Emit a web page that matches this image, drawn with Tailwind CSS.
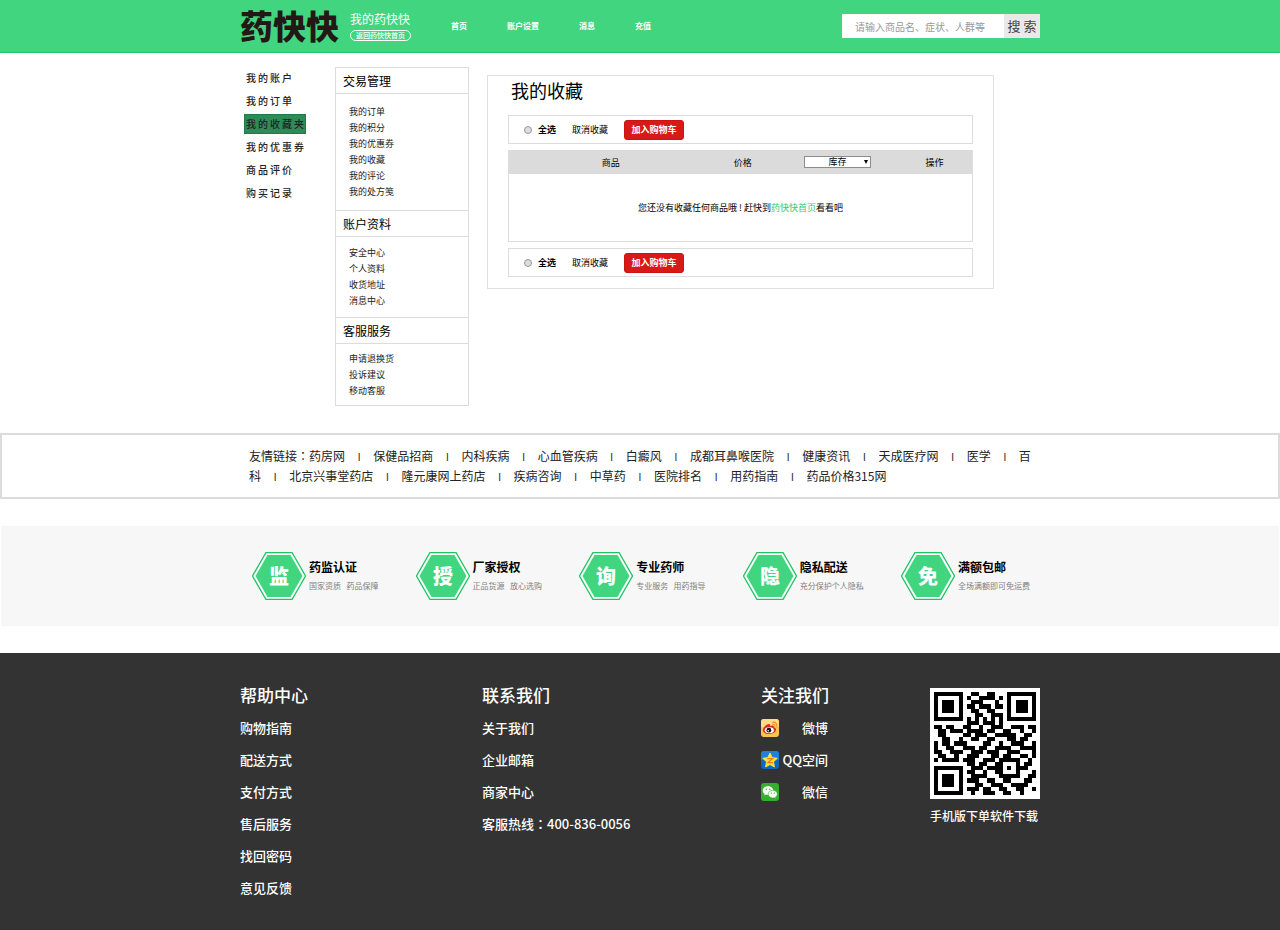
<!DOCTYPE html>
<html lang="zh-CN">
<head>
    <meta charset="UTF-8">
    <meta name="viewport" content="width=device-width, initial-scale=1.0">
    <title>我的收藏 - 药快快</title>
    <script src="https://cdn.jsdelivr.net/npm/@tailwindcss/browser@4"></script>
</head>
<body class="min-h-screen flex flex-col bg-white text-[#222] font-['Noto_Sans_CJK_SC',sans-serif]">

    <!-- 顶部 -->
    <header class="bg-[#42d57f] border-b border-[#1cc563]">
        <div class="max-w-[800px] h-[52px] mx-auto flex items-center">
            <a href="#" class="pb-[2px] text-[33px] leading-[33px] font-black text-[#231815]">药快快</a>
            <div class="ml-[11px] w-[61px] text-white">
                <p class="text-[12px] leading-4 whitespace-nowrap">我的药快快</p>
                <a href="#" class="mt-[3px] mb-px h-[11px] border border-white rounded-full flex items-center justify-center text-[7px] leading-none font-medium whitespace-nowrap">返回药快快首页</a>
            </div>
            <nav class="ml-10 flex gap-10 text-[8px] font-bold text-white whitespace-nowrap">
                <a href="#">首页</a>
                <a href="#">账户设置</a>
                <a href="#">消息</a>
                <a href="#">充值</a>
            </nav>
            <form class="ml-auto h-6 flex">
                <input type="text" aria-label="搜索商品" placeholder="请输入商品名、症状、人群等" class="w-[162px] bg-white pl-[13px] text-[10px] placeholder:text-[#999] outline-none">
                <button type="button" class="w-9 bg-[#e9e9e9] text-[13px] leading-6 text-[#444] whitespace-nowrap">搜 索</button>
            </form>
        </div>
    </header>

    <!-- 主体 -->
    <div class="w-full max-w-[800px] mx-auto pt-[14px] flex items-start">
        <ul class="w-[91px] pl-1 pt-px shrink-0 flex flex-col items-start gap-[3px] text-[10px] leading-5 font-medium tracking-[2px] whitespace-nowrap">
            <li class="px-[2px]"><a href="#">我的账户</a></li>
            <li class="px-[2px]"><a href="#">我的订单</a></li>
            <li class="pl-[2px] bg-[#2e8b57] outline-1 -outline-offset-1 outline-[#217a48]"><a href="#">我的收藏夹</a></li>
            <li class="px-[2px]"><a href="#">我的优惠券</a></li>
            <li class="px-[2px]"><a href="#">商品评价</a></li>
            <li class="px-[2px]"><a href="#">购买记录</a></li>
        </ul>

        <aside class="ml-1 w-[134px] shrink-0 border border-[#dcdcdc] text-[9px] leading-4">
            <h2 class="pl-[7px] text-[12px] leading-[25px] text-black border-b border-[#dcdcdc]">交易管理</h2>
            <ul class="pl-[13px] py-[10px]">
                <li><a href="#">我的订单</a></li>
                <li><a href="#">我的积分</a></li>
                <li><a href="#">我的优惠券</a></li>
                <li><a href="#">我的收藏</a></li>
                <li><a href="#">我的评论</a></li>
                <li><a href="#">我的处方笺</a></li>
            </ul>
            <h2 class="pl-[7px] text-[12px] leading-[25px] text-black border-y border-[#dcdcdc]">账户资料</h2>
            <ul class="pl-[13px] py-2">
                <li><a href="#">安全中心</a></li>
                <li><a href="#">个人资料</a></li>
                <li><a href="#">收货地址</a></li>
                <li><a href="#">消息中心</a></li>
            </ul>
            <h2 class="pl-[7px] text-[12px] leading-[25px] text-black border-y border-[#dcdcdc]">客服服务</h2>
            <ul class="pl-[13px] pt-[7px] pb-[6px]">
                <li><a href="#">申请退换货</a></li>
                <li><a href="#">投诉建议</a></li>
                <li><a href="#">移动客服</a></li>
            </ul>
        </aside>

        <main class="ml-[18px] mt-2 w-[507px] px-5 pb-[11px] border border-[#e0e0e0] text-[9px] text-black">
            <h1 class="pl-[3px] pb-[11px] text-[18px] leading-7">我的收藏</h1>

            <div class="h-[29px] pl-[15px] border border-[#dcdcdc] flex items-center">
                <input type="radio" id="allTop" class="appearance-none size-2 rounded-full border border-[#999] bg-[#ddd]">
                <label for="allTop" class="ml-[6px] font-bold">全选</label>
                <button type="button" class="ml-4">取消收藏</button>
                <button type="button" class="ml-4 w-[60px] h-5 rounded-[3px] bg-[#d71a18] border border-[#c81414] text-white font-bold">加入购物车</button>
            </div>

            <table class="mt-[6px] w-full table-fixed border border-[#dcdcdc]">
                <thead>
                    <tr class="h-[23px] bg-[#dbdbdb]">
                        <th class="w-[44%] font-normal">商品</th>
                        <th class="w-[13%] font-normal">价格</th>
                        <th class="w-[28%] font-normal">
                            <div class="relative w-[67px] h-3 mx-auto">
                                <select aria-label="库存" class="appearance-none block w-full h-3 pl-[23px] bg-white border border-[#8c8c8c] text-[9px] leading-[10px]">
                                    <option>库存</option>
                                </select>
                                <span class="absolute right-[3px] top-1 border-x-2 border-x-transparent border-t-4 border-t-black pointer-events-none"></span>
                            </div>
                        </th>
                        <th class="w-[15%] pr-[6px] font-normal">操作</th>
                    </tr>
                </thead>
                <tbody>
                    <tr>
                        <td colspan="4" class="h-[68px] text-center">您还没有收藏任何商品哦 ! 赶快到<a href="#" class="text-[#2fcb70]">药快快首页</a>看看吧</td>
                    </tr>
                </tbody>
            </table>

            <div class="mt-[6px] h-[29px] pl-[15px] border border-[#dcdcdc] flex items-center">
                <input type="radio" id="allBottom" class="appearance-none size-2 rounded-full border border-[#999] bg-[#ddd]">
                <label for="allBottom" class="ml-[6px] font-bold">全选</label>
                <button type="button" class="ml-4">取消收藏</button>
                <button type="button" class="ml-4 w-[60px] h-5 rounded-[3px] bg-[#d71a18] border border-[#c81414] text-white font-bold">加入购物车</button>
            </div>
        </main>
    </div>

    <!-- 友情链接 -->
    <section class="mt-[27px] border-2 border-[#dcdcdc]">
        <p class="max-w-[800px] mx-auto pl-[9px] py-[11px] text-[12px] leading-5">
            友情链接<span class="font-['Noto_Sans_CJK_TC',sans-serif]" lang="zh-TW">：</span><a href="#">药房网</a>
            <span class="px-[10px] font-['Liberation_Sans',sans-serif] text-[10px] leading-none">I</span> <a href="#">保健品招商</a>
            <span class="px-[10px] font-['Liberation_Sans',sans-serif] text-[10px] leading-none">I</span> <a href="#">内科疾病</a>
            <span class="px-[10px] font-['Liberation_Sans',sans-serif] text-[10px] leading-none">I</span> <a href="#">心血管疾病</a>
            <span class="px-[10px] font-['Liberation_Sans',sans-serif] text-[10px] leading-none">I</span> <a href="#">白癜风</a>
            <span class="px-[10px] font-['Liberation_Sans',sans-serif] text-[10px] leading-none">I</span> <a href="#">成都耳鼻喉医院</a>
            <span class="px-[10px] font-['Liberation_Sans',sans-serif] text-[10px] leading-none">I</span> <a href="#">健康资讯</a>
            <span class="px-[10px] font-['Liberation_Sans',sans-serif] text-[10px] leading-none">I</span> <a href="#">天成医疗网</a>
            <span class="px-[10px] font-['Liberation_Sans',sans-serif] text-[10px] leading-none">I</span> <a href="#">医学</a>
            <span class="px-[10px] font-['Liberation_Sans',sans-serif] text-[10px] leading-none">I</span> <a href="#">百科</a>
            <span class="px-[10px] font-['Liberation_Sans',sans-serif] text-[10px] leading-none">I</span> <a href="#">北京兴事堂药店</a>
            <span class="px-[10px] font-['Liberation_Sans',sans-serif] text-[10px] leading-none">I</span> <a href="#">隆元康网上药店</a>
            <span class="px-[10px] font-['Liberation_Sans',sans-serif] text-[10px] leading-none">I</span> <a href="#">疾病咨询</a>
            <span class="px-[10px] font-['Liberation_Sans',sans-serif] text-[10px] leading-none">I</span> <a href="#">中草药</a>
            <span class="px-[10px] font-['Liberation_Sans',sans-serif] text-[10px] leading-none">I</span> <a href="#">医院排名</a>
            <span class="px-[10px] font-['Liberation_Sans',sans-serif] text-[10px] leading-none">I</span> <a href="#">用药指南</a>
            <span class="px-[10px] font-['Liberation_Sans',sans-serif] text-[10px] leading-none">I</span> <a href="#">药品价格315网</a>
        </p>
    </section>

    <!-- 服务承诺 -->
    <section class="mt-[27px] mx-px bg-[#f7f7f7]">
        <ul class="max-w-[800px] h-[100px] mx-auto pl-3 pr-[10px] flex items-center justify-between whitespace-nowrap">
            <li class="flex items-center gap-[3px]">
                <svg class="w-[54px] h-12" viewBox="0 0 54 48">
                    <path d="M14 .5h26L53.500 24 40 47.500H14L.5 24z" fill="#fff" stroke="#1cc563" stroke-width="1.300"/>
                    <path d="M15.500 3h23L50.500 24l-12 21h-23L3.500 24z" fill="#42d57f"/>
                    <text x="27" y="32" text-anchor="middle" font-size="20" font-weight="900" fill="#fff">监</text>
                </svg>
                <div>
                    <h3 class="text-[12px] leading-5 font-bold text-black">药监认证</h3>
                    <p class="text-[8px] leading-[18px] text-[#808080]">国家资质 &nbsp; 药品保障</p>
                </div>
            </li>
            <li class="flex items-center gap-[3px]">
                <svg class="w-[54px] h-12" viewBox="0 0 54 48">
                    <path d="M14 .5h26L53.500 24 40 47.500H14L.5 24z" fill="#fff" stroke="#1cc563" stroke-width="1.300"/>
                    <path d="M15.500 3h23L50.500 24l-12 21h-23L3.500 24z" fill="#42d57f"/>
                    <text x="27" y="32" text-anchor="middle" font-size="20" font-weight="900" fill="#fff">授</text>
                </svg>
                <div>
                    <h3 class="text-[12px] leading-5 font-bold text-black">厂家授权</h3>
                    <p class="text-[8px] leading-[18px] text-[#808080]">正品货源 &nbsp; 放心选购</p>
                </div>
            </li>
            <li class="flex items-center gap-[3px]">
                <svg class="w-[54px] h-12" viewBox="0 0 54 48">
                    <path d="M14 .5h26L53.500 24 40 47.500H14L.5 24z" fill="#fff" stroke="#1cc563" stroke-width="1.300"/>
                    <path d="M15.500 3h23L50.500 24l-12 21h-23L3.500 24z" fill="#42d57f"/>
                    <text x="27" y="32" text-anchor="middle" font-size="20" font-weight="900" fill="#fff">询</text>
                </svg>
                <div>
                    <h3 class="text-[12px] leading-5 font-bold text-black">专业药师</h3>
                    <p class="text-[8px] leading-[18px] text-[#808080]">专业服务 &nbsp; 用药指导</p>
                </div>
            </li>
            <li class="flex items-center gap-[3px]">
                <svg class="w-[54px] h-12" viewBox="0 0 54 48">
                    <path d="M14 .5h26L53.500 24 40 47.500H14L.5 24z" fill="#fff" stroke="#1cc563" stroke-width="1.300"/>
                    <path d="M15.500 3h23L50.500 24l-12 21h-23L3.500 24z" fill="#42d57f"/>
                    <text x="27" y="32" text-anchor="middle" font-size="20" font-weight="900" fill="#fff">隐</text>
                </svg>
                <div>
                    <h3 class="text-[12px] leading-5 font-bold text-black">隐私配送</h3>
                    <p class="text-[8px] leading-[18px] text-[#808080]">充分保护个人隐私</p>
                </div>
            </li>
            <li class="flex items-center gap-[3px]">
                <svg class="w-[54px] h-12" viewBox="0 0 54 48">
                    <path d="M14 .5h26L53.500 24 40 47.500H14L.5 24z" fill="#fff" stroke="#1cc563" stroke-width="1.300"/>
                    <path d="M15.500 3h23L50.500 24l-12 21h-23L3.500 24z" fill="#42d57f"/>
                    <text x="27" y="32" text-anchor="middle" font-size="20" font-weight="900" fill="#fff">免</text>
                </svg>
                <div>
                    <h3 class="text-[12px] leading-5 font-bold text-black">满额包邮</h3>
                    <p class="text-[8px] leading-[18px] text-[#808080]">全场满额即可免运费</p>
                </div>
            </li>
        </ul>
    </section>

    <!-- 底部 -->
    <footer class="mt-[27px] grow bg-[#333] text-white">
        <div class="max-w-[800px] mx-auto pt-[30px] pb-[26px] flex text-[13px] leading-8 font-medium whitespace-nowrap">
            <div class="w-[242px]">
                <h2 class="text-[17px] leading-6 mb-[5px]">帮助中心</h2>
                <ul>
                    <li><a href="#">购物指南</a></li>
                    <li><a href="#">配送方式</a></li>
                    <li><a href="#">支付方式</a></li>
                    <li><a href="#">售后服务</a></li>
                    <li><a href="#">找回密码</a></li>
                    <li><a href="#">意见反馈</a></li>
                </ul>
            </div>
            <div class="w-[279px]">
                <h2 class="text-[17px] leading-6 mb-[5px]">联系我们</h2>
                <ul>
                    <li><a href="#">关于我们</a></li>
                    <li><a href="#">企业邮箱</a></li>
                    <li><a href="#">商家中心</a></li>
                    <li>客服热线<span class="font-['Noto_Sans_CJK_TC',sans-serif]" lang="zh-TW">：</span>400-836-0056</li>
                </ul>
            </div>
            <div class="w-[67px]">
                <h2 class="text-[17px] leading-6 mb-[5px]">关注我们</h2>
                <ul>
                    <li><a href="#" class="flex items-center justify-between">
                        <svg class="size-[18px]" viewBox="0 0 18 18">
                            <rect width="18" height="18" rx="3" fill="#fbc44c"/>
                            <path d="M0 3a3 3 0 0 1 3-3h12a3 3 0 0 1 3 3v5H0z" fill="#fddc85"/>
                            <path d="M2 11.200c0-3 4.500-7 6.700-6 .8.400.5 1.400.4 1.800 1.700-.8 4-.8 3.800 1.300 2.400.6 2.600 2.500 1.600 4-2.800 4-12.500 3.400-12.500-1.100z" fill="#e02a25"/>
                            <ellipse cx="8.300" cy="11.200" rx="4.600" ry="3" fill="#fff"/>
                            <circle cx="7.900" cy="11.200" r="2.400" fill="#111"/>
                            <circle cx="7.200" cy="11.700" r=".8" fill="#fff"/>
                            <path d="M11.500 5.300c1.700-.2 2.700.9 2.400 2.500M11.400 3.200c3.200-.5 5.100 1.800 4.500 4.800" fill="none" stroke="#f08a1c" stroke-width="1.100" stroke-linecap="round"/>
                        </svg>
                        <span>微博</span>
                    </a></li>
                    <li><a href="#" class="flex items-center justify-between">
                        <svg class="size-[18px]" viewBox="0 0 18 18">
                            <rect width="18" height="18" rx="3" fill="#0f68c4"/>
                            <path d="M0 3a3 3 0 0 1 3-3h12a3 3 0 0 1 3 3v6H0z" fill="#2280d8"/>
                            <path d="M9 2l2.200 4.700 5 .6-3.700 3.500.9 5.100L9 13.500l-4.400 2.400.9-5.100L1.800 7.300l5-.6z" fill="#fde23e" stroke="#fde23e" stroke-linejoin="round"/>
                            <path d="M6.200 7.700h5.300L7 11.700h5" fill="none" stroke="#ee7b1a" stroke-width="1.300"/>
                        </svg>
                        <span>QQ空间</span>
                    </a></li>
                    <li><a href="#" class="flex items-center justify-between">
                        <svg class="size-[18px]" viewBox="0 0 18 18">
                            <rect width="18" height="18" rx="3" fill="#36ae2f"/>
                            <path d="M7 3.200c-3 0-5.300 1.900-5.300 4.400 0 1.400.8 2.600 2 3.400l-.5 1.600 1.900-1c.6.200 1.200.3 1.900.3 3 0 5.300-1.900 5.300-4.300S10 3.200 7 3.200z" fill="#fff"/>
                            <path d="M11.800 7.300c-2.600 0-4.600 1.600-4.600 3.800s2 3.800 4.600 3.800c.6 0 1.100-.1 1.600-.2l1.500.8-.4-1.400c1.100-.7 1.800-1.800 1.800-3 0-2.200-2-3.800-4.500-3.800z" fill="#fff" stroke="#36ae2f" stroke-width=".6"/>
                            <g fill="#36ae2f"><circle cx="5.300" cy="6.300" r=".7"/><circle cx="8.800" cy="6.300" r=".7"/><circle cx="10.400" cy="10.200" r=".6"/><circle cx="13.300" cy="10.200" r=".6"/></g>
                        </svg>
                        <span>微信</span>
                    </a></li>
                </ul>
            </div>
            <div class="ml-auto mt-[5px] w-[110px]">
                <svg id="qr" class="w-[110px] h-[111px] bg-white" viewBox="-1 -1 27 27" preserveAspectRatio="none" shape-rendering="crispEdges" role="img" aria-label="手机版下单软件下载二维码"></svg>
                <p class="mt-[7px] text-[12px] leading-5">手机版下单软件下载</p>
            </div>
        </div>
    </footer>

    <script>
        // 二维码点阵，1 为黑色
        const rows = [
            '1111111001100110001111111',
            '1000001010011110101000001',
            '1011101001110001001011101',
            '1011101011011101101011101',
            '1011101001100110001011101',
            '1000001000110011101000001',
            '1111111010101010101111111',
            '0000000011101110100000000',
            '1101100110010011100111011',
            '0110111011110110011001001',
            '0110000110111001111100110',
            '0011001001100110001101100',
            '1011011100001100100111001',
            '1001100111011001111001111',
            '1100111001110111001110001',
            '0110010011100011011001101',
            '1011110111001110111110010',
            '0000000011011001100010110',
            '1111111001110111101011100',
            '1000001011001001100010001',
            '1011101001111000111110011',
            '1011101011100110011000110',
            '1011101000110011100111100',
            '1000001011101100110011001',
            '1111111001001110011001000'
        ];
        let d = '';
        rows.forEach((row, y) => {
            [...row].forEach((bit, x) => {
                if (bit === '1') d += `M${x} ${y}h1v1h-1z`;
            });
        });
        document.getElementById('qr').innerHTML = `<path d="${d}" fill="#000"/>`;
    </script>
</body>
</html>
